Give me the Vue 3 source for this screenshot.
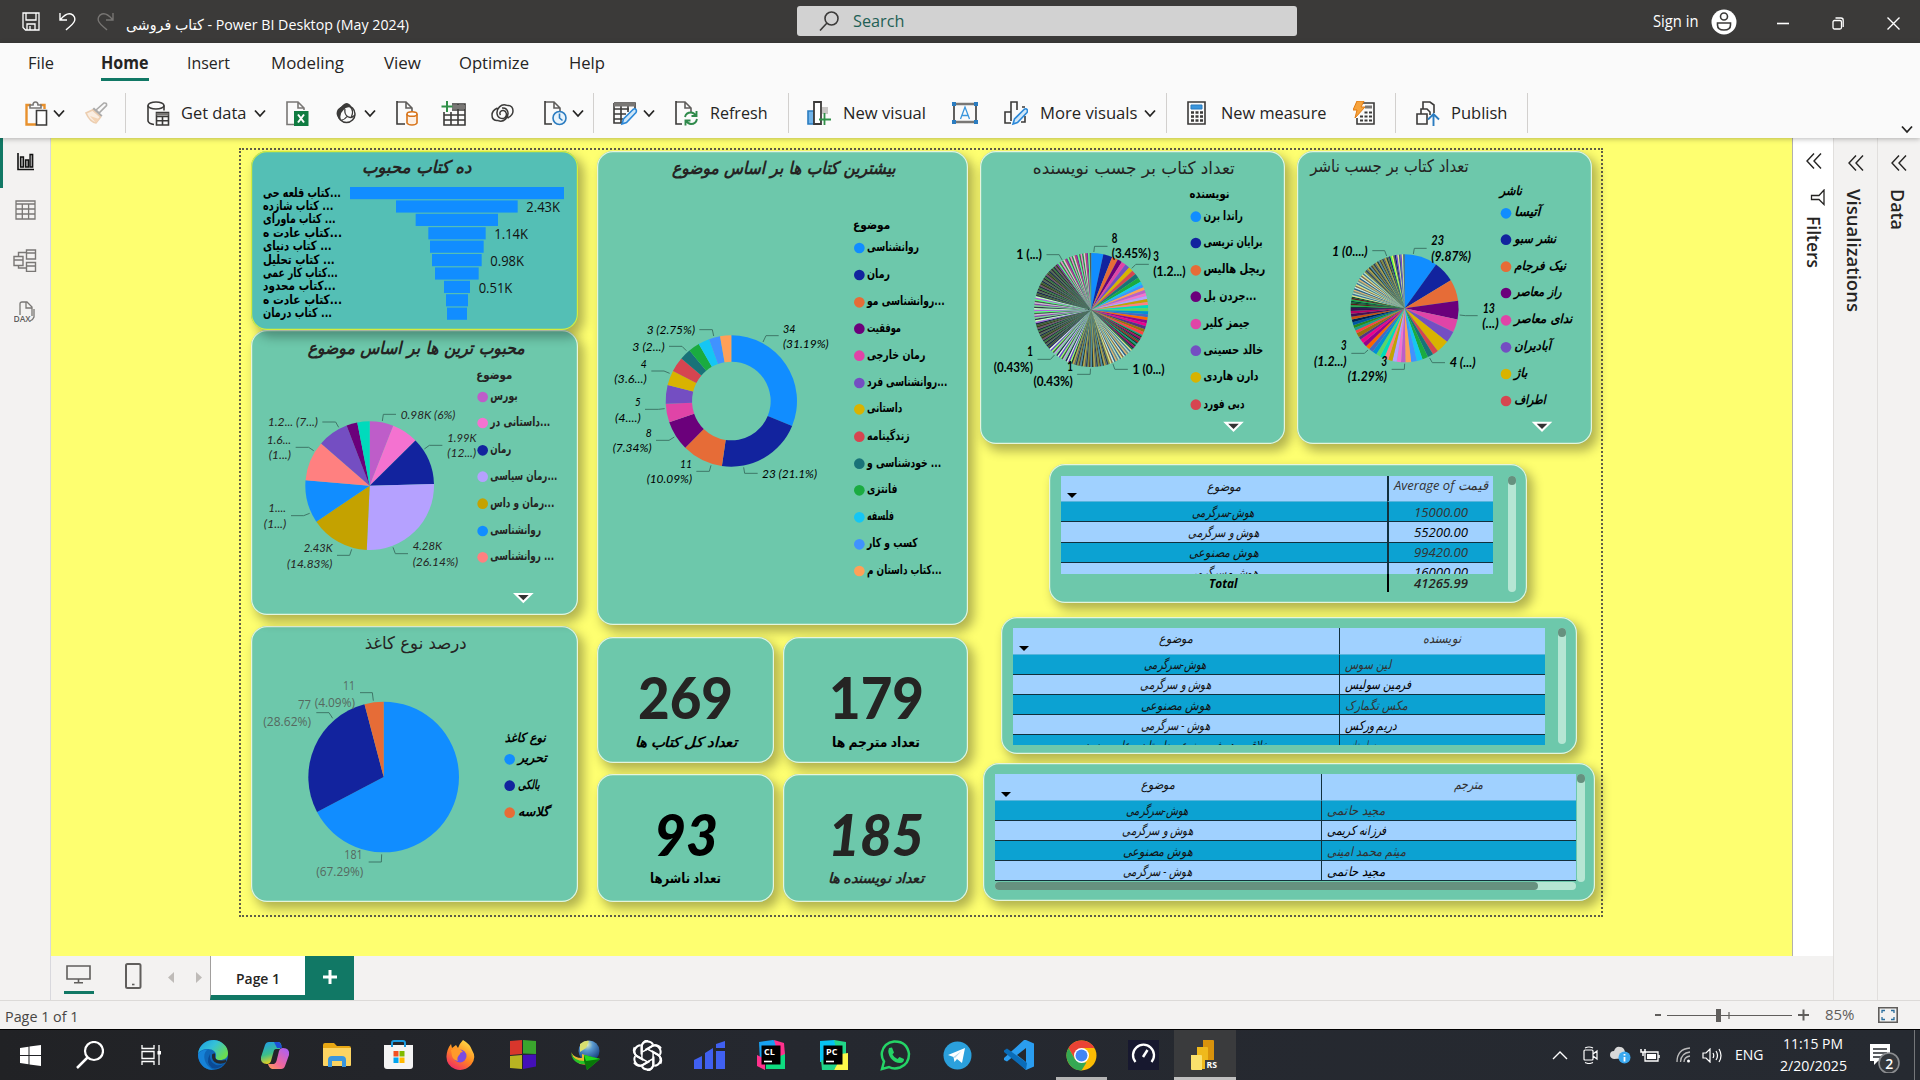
<script setup>
import { h } from 'vue'

const UI = "'Open Sans','DejaVu Sans',sans-serif"

/* Single line of text set to an exact advance width */
const T = (p) =>
  h('svg', { width: p.w, height: p.s * 1.4, overflow: 'visible' }, [
    h('text', {
      x: 0, y: p.s * 1.06, 'font-size': p.s, 'font-family': p.f || UI,
      'font-weight': p.b || 400, 'font-style': p.i ? 'italic' : 'normal',
      fill: p.c || '#252423', textLength: p.w, lengthAdjust: 'spacingAndGlyphs'
    }, p.t)
  ])
T.props = ['t', 'w', 's', 'b', 'i', 'c', 'f']

/* Icon from the table below */
const Ico = (p) => {
  const d = icons[p.n]
  return h('svg', {
    width: d[0], height: d[1], viewBox: `0 0 ${d[0]} ${d[1]}`, fill: 'none',
    stroke: '#3b3a39', 'stroke-width': 1.6, innerHTML: d[2]
  })
}
Ico.props = ['n']

const doc = (w) => `<path d="M1 1h9l6 6v5M10 1v6h6" stroke="#605e5c"/><path d="M1 0v23h${w}" stroke="#3b3a39"/>`
const grid = '<path d="M1 2h21v21H1zM1 8h21M1 13h21M1 18h21M8 2v21M15 2v21"/>'
const pen = '<path d="M9 23l1.500-5L20 8.500q2-1.500 3 0t0 3L13.500 21.500z" fill="#d0e7f8" stroke="#2b88d8"/>'

const icons = {
  chev: [12, 9, '<path d="M1 1.500l5 5.500 5-5.500" stroke="#252423" stroke-width="1.800"/>'],
  save: [18, 19, '<path d="M1 1h16v17H3.500L1 15.500zM4 1v7h10V1M5 18v-6h8v6M8 14v4" stroke="#fff" stroke-width="1.300"/>'],
  undo: [18, 19, '<path d="M1 1v7h7M1.500 7.500C6 2 9 1 12 2s5 4.500 3 8-5 5-8 8" stroke="#fff" stroke-width="1.400"/>'],
  redo: [18, 19, '<path d="M17 1v7h-7M16.500 7.500C12 2 9 1 6 2s-5 4.500-3 8 5 5 8 8" stroke="#777573" stroke-width="1.400"/>'],
  search: [20, 20, '<circle cx="12.500" cy="7.500" r="6.500"/><path d="M8 12l-7 7.500"/>'],
  user: [26, 26, '<circle cx="13" cy="13" r="12.500" fill="#fff" stroke="none"/><circle cx="13" cy="7.500" r="3.500"/><path d="M6.500 14h13v2q0 5-6.500 5t-6.500-5z"/>'],
  min: [12, 12, '<path d="M0 6.500h12" stroke="#fff"/>'],
  restore: [12, 13, '<rect x="1" y="3.500" width="8.500" height="8.500" rx="1.500" stroke="#fff" stroke-width="1.300"/><path d="M3.500 1H9q2.200 0 2.200 2.200V10" stroke="#fff" stroke-width="1.300"/>'],
  close: [13, 13, '<path d="M.5.500l12 12M12.500.500l-12 12" stroke="#fff" stroke-width="1.400"/>'],
  paste: [23, 25, '<path d="M6 4H1.500v19.500H11M15 4h4.500v4" stroke="#e8912d" stroke-width="2.400"/><path d="M5 7V4h3q0-3 2.500-3T13 4h3v3z" fill="#fafafa" stroke="#797775"/><path d="M11.500 9.500h10v14.500h-10z" fill="#fff"/>'],
  brush: [23, 22, '<g opacity=".5"><path d="M11 8l8-7q3-.5 2.500 2.500L14 11z" stroke="#605e5c"/><path d="M8 6.500l8.500 8" stroke="#605e5c" stroke-width="3"/><path d="M7.500 8L1 11q4 9 10 10l4.500-6z" stroke="#e0a368" fill="#fbe3cb"/><path d="M5 14l9 3-3 4z" fill="#f0b070" stroke="none"/></g>'],
  getdata: [23, 25, '<ellipse cx="9" cy="4.500" rx="8" ry="3.500"/><path d="M1 4.500V20q1 3 6 3.500M17 4.500v5"/><path d="M9.500 11.500h12V24h-12zM9.500 15.500h12M9.500 19.800h12M15.500 15v9"/><path d="M9.500 12h12v2.500h-12z" fill="#797775" stroke="none"/>'],
  excel: [23, 25, '<path d="M8 23.500H1V1h11l6 6v2M12 1v6h6" stroke="#797775"/><path d="M8 10h14.500v15H8z" fill="#107c41" stroke="none"/><path d="M12 13.500l6 8M18 13.500l-6 8" stroke="#fff" stroke-width="2"/>'],
  onelake: [20, 22, '<circle cx="10.500" cy="12" r="8.500" stroke-width="1.500"/><path d="M5 5q3-4 6-4 4 1 4.500 5-5-2-8 2Q3 12 5 18-2 13 2 7z" fill="#3b3a39" stroke="none"/><path d="M9 7q-1 5 2.500 7.500T19 13M5 18.500q4-1 6-4M14.500 5q3.500 4 1 9.500" stroke-width="1.300"/>'],
  sql: [23, 25, doc(8) + '<path d="M11 13v9q1 2 5 2t5-2v-9" stroke="#d8741a" fill="#fdf0e4"/><ellipse cx="16" cy="13" rx="5" ry="2.300" stroke="#d8741a" fill="#fff"/>'],
  enter: [25, 25, '<g transform="translate(2 1)">' + grid + '<path d="M8 3h14v4H8z" fill="#797775" stroke="none"/></g><path d="M0 0h11v11H0z" fill="#fafafa" stroke="none"/><path d="M6 0v11M.5 5.500h11" stroke="#309048" stroke-width="2"/>'],
  dataverse: [23, 18, '<path d="M15.500 1.200C10-.5 5.500 4.500 6 9.500s5.500 6 8 4 1.500-6.500-1.500-7-4.500 2.500-3 4.500M6.500 4Q1 6.500 1 11q0 5 4.500 5.500M7.500 16.800C13 18.500 17.500 13.500 17 8.500M16.500 14Q22 11.500 22 7q0-5.500-6.500-5.800M17 8.500Q16 3.500 11 4M5.500 16.500h2" stroke-width="1.500"/>'],
  recent: [23, 25, doc(7) + '<circle cx="15.500" cy="17" r="6.500" stroke="#2b7cc0" fill="#e8f3fb"/><path d="M15.500 12.500V17l3 2.500" stroke="#2b7cc0"/>'],
  transform: [25, 25, '<path d="M1 2h21v6M1 2v20h8M1 8h15M1 13h12M1 18h9M8 2v20M15 5v6"/><path d="M1 1.500h21v4H1z" fill="#797775" stroke="none"/>' + pen],
  refresh: [23, 25, doc(6) + '<path d="M10 16q1-4.500 6-4.500 3 0 5 3.500M21.500 10v5h-5M22 18q-1 5-6 5-3 0-5-3.500M10.500 24.500v-5h5" stroke="#2f8a4b" stroke-width="1.900"/>'],
  visual: [24, 25, '<path d="M1 10h6v13H1z" fill="#71b4ea" stroke="#2b7cc0"/><path d="M7 1h7v22H7z" fill="#fff" stroke-width="1.800"/><path d="M15 6h6v7h-6z" fill="#c8c6c4" stroke="none"/><path d="M17.500 12v12M12 18.500h12" stroke="#309048" stroke-width="1.800"/>'],
  textbox: [26, 22, '<path d="M2 2h22v18H2z"/><path d="M2 2h22M2 20h22" stroke="#797775" stroke-width="2.500"/><path d="M0 0h4v4H0zM22 0h4v4h-4zM0 18h4v4H0zM22 18h4v4h-4z" fill="#2b7cc0" stroke="none"/><path d="M8.500 17L13 5l4.500 12M10 13.500h6" stroke="#3a96dd" stroke-width="1.300"/>'],
  more: [24, 25, '<path d="M7 22H1V11h6V1h6v8M18 6h3M7 11v9"/>' + '<path d="M17 21h4v-6"/>' + pen],
  calc: [19, 24, '<path d="M1 1h17v22H1z"/><path d="M4 4h11v4H4z" fill="#3a96dd" stroke="#2b7cc0" stroke-width="1"/><path d="M4 11.500h3M8.500 11.500h3M13 11.500h3M4 15.500h3M8.500 15.500h3M13 15.500h3M4 19.500h3M8.500 19.500h3M13 19.500h3" stroke-width="2.300"/>'],
  quick: [22, 25, '<path d="M10 2h11v21H4v-6"/><path d="M12 6h7" stroke="#797775" stroke-width="3"/><path d="M7 15.500h3M11.500 15.500h3M16 15.500h3M7 19.500h3M11.500 19.500h3M16 19.500h3M11.500 11.500h3M16 11.500h3" stroke-width="2.200"/><path d="M4 0h7L8 6h4L2 17l2-8H0z" fill="#f7a33c" stroke="#e07a10" stroke-width="1"/>'],
  publish: [24, 25, '<path d="M7 8V1h7l4 3v8M5 13V8h6l3 3v3M1 13h10v10H1z" /><path d="M17.500 25V14M12 18.500l5.500-5.500 5.500 5.500" stroke="#2b7cc0" stroke-width="1.900"/>'],
  bars: [17, 18, '<path d="M1 0v16.500h16" stroke="#111"/><path d="M3.500 4h3v10h-3zM8.500 7h3v7h-3zM13 1.500h2.700V14H13z" stroke="#111" fill="#999" stroke-width="1.300"/>'],
  table: [21, 20, '<path d="M1 1h19v18H1zM1 4h19M1 9h19M1 14h19M7.300 4v15M13.600 4v15" stroke="#797775" stroke-width="1.300"/>'],
  model: [24, 23, '<path d="M13.500 1h9v9h-9zM13.500 4h9M1 7.500h9v9H1zM1 11h9M13.500 13.500h9v9h-9zM13.500 17h9M5.500 7.500v-4h8M5.500 16.500V19h8" stroke="#797775" stroke-width="1.400"/>'],
  dax: [22, 21, '<path d="M6 14V3q0-2 2-2h5l5 5v9M12 1v6h6M20 8v8q-1 3-4 4" stroke="#797775" stroke-width="1.300"/><text x="-.5" y="20.500" font-size="8.500" font-weight="600" font-family="Open Sans" fill="#605e5c" stroke="none" textLength="17">DAX</text>'],
  dbl: [16, 16, '<path d="M8 .5L1 8l7 7.500M15 .500L8 8l7 7.500" stroke="#252423" stroke-width="1.400"/>'],
  funnel: [15, 17, '<path d="M14 1v14.500L9 10.500H1.500v-4H9z" stroke="#252423" stroke-width="1.300"/>'],
  monitor: [25, 19, '<path d="M1 1h23v13H1zM12.500 14v4M8 17.800h9" stroke="#605e5c"/>'],
  phone: [17, 26, '<rect x="1" y="1" width="14.500" height="24" rx="1.500" stroke="#605e5c" stroke-width="2"/><path d="M7 21.500h2.500" stroke="#605e5c"/>'],
  prev: [6, 11, '<path d="M6 0v11L0 5.500z" fill="#bebbb8" stroke="none"/>'],
  next: [6, 11, '<path d="M0 0v11l6-5.500z" fill="#bebbb8" stroke="none"/>'],
  plus: [14, 14, '<path d="M7 0v14M0 7h14" stroke="#fff" stroke-width="3"/>'],
  slider: [155, 16, '<path d="M0 8h6M143 8h11M148.500 2.500v11" stroke="#605e5c" stroke-width="2"/><path d="M12 8.500h125" stroke="#605e5c" stroke-width="1.200"/><path d="M63.500 2v13" stroke="#605e5c" stroke-width="5"/><path d="M74 5v7" stroke="#605e5c" stroke-width="1.200"/>'],
  fit: [20, 16, '<path d="M.8.800h18.400v14.400H.800z" stroke="#605e5c"/><path d="M4 6V3.500h3M13 3.500h3V6M16 10v2.500h-3M7 12.500H4V10" stroke="#2b6f9e" stroke-width="1.300"/>'],
  win: [21, 21, '<path d="M0 3l8.500-1.200v8.200H0zM9.500 1.600L21 0v10H9.500zM0 11h8.500v8.200L0 18zM9.500 11H21v10L9.500 19.400z" fill="#fff" stroke="none"/>'],
  find: [28, 28, '<circle cx="18" cy="10" r="9" stroke="#fff" stroke-width="2.200"/><path d="M11.500 16.500L1 27" stroke="#fff" stroke-width="2.500"/>'],
  tasks: [21, 20, '<path d="M1 0v3.500h12V0M1 20v-3.500h12V20M1 6.500h12v7H1zM18 0v20" stroke="#fff" stroke-width="1.300"/><path d="M16.500 6h3.500v3.500h-3.500z" fill="#fff" stroke="none"/>'],
  edge: [30, 30, '<defs><linearGradient id="ge" x1="0" y1="0" x2="1" y2=".6"><stop stop-color="#1b9de2"/><stop offset=".5" stop-color="#35c1d8"/><stop offset="1" stop-color="#6bdc4f"/></linearGradient></defs><g stroke="none"><circle cx="15" cy="15" r="15" fill="#0f67b8"/><path d="M0 14C1 4 9 0 16 0c9 1 14 7 14 13 0 5-4 7-8 7-3 0-5-1-4-3 1-5-3-8-8-8-5 0-9 2-10 5z" fill="url(#ge)"/><path d="M10 9.500C4 12 5 25 15 29.500 8 31 0 24 0 14q4-5 10-4.500z" fill="#1683d8"/><path d="M12 14q-1 8 6 11 5 1 9-2-6 7-13 5-7-5-2-14z" fill="#0b4a94"/><path d="M28.500 22q-5 3-10 1-5-2-4.500-8 0-2 3-1.500-1 8 7 7 3 0 4-1z" fill="#25282e"/></g>'],
  copilot: [30, 28, '<defs><linearGradient id="c1" x1="0" y1="0" x2=".3" y2="1"><stop stop-color="#1f9cf0"/><stop offset=".6" stop-color="#3cbf8a"/><stop offset="1" stop-color="#e8d020"/></linearGradient><linearGradient id="c2" x1=".8" y1="0" x2="0" y2="1"><stop stop-color="#b060f0"/><stop offset=".6" stop-color="#f0689a"/><stop offset="1" stop-color="#fba052"/></linearGradient></defs><g stroke="none"><path d="M9 1h9q3 0 3.500 4L20 8h-4q-2 0-2.500 3L11 20q-1 3-4 3-7 0-6-7L5 4q1-3 4-3z" fill="url(#c1)"/><path d="M23 7q7 0 6 7l-4 11q-1 3-4 3h-9q-3-1-4-5h6q2-1 2.500-3L19 10q1-3 4-3z" fill="url(#c2)"/><path d="M14 1h4q3 0 4 6h-5z" fill="#1d4fd8"/></g>'],
  folder: [28, 24, '<g stroke="none"><path d="M0 2q0-2 2-2h9l3 3h12q2 0 2 2v17H0z" fill="#e8a713"/><path d="M0 5h28v17q0 1-1 1H1q-1 0-1-1z" fill="#fcd462"/><path d="M5 24v-7q0-4 4-4h10q4 0 4 4v7h-4v-6H9v6z" fill="#3a96dd"/></g>'],
  store: [30, 30, '<g stroke="none"><path d="M0 5h29v21q0 3-3 3H3q-3 0-3-3z" fill="#f4f4f4"/><path d="M9.500 11h5v5.500h-5z" fill="#f25022"/><path d="M15.500 11h5v5.500h-5z" fill="#7fba00"/><path d="M9.500 17.500h5V23h-5z" fill="#00a4ef"/><path d="M15.500 17.500h5V23h-5z" fill="#ffb900"/></g><path d="M8 7V3q0-2 2-2h9q2 0 2 2v4" stroke="#1a9be0" stroke-width="2"/>'],
  firefox: [30, 30, '<defs><linearGradient id="ff" x1=".8" y1="0" x2=".2" y2="1"><stop stop-color="#ffe14a"/><stop offset=".5" stop-color="#ff8a1f"/><stop offset="1" stop-color="#f0256a"/></linearGradient></defs><g stroke="none"><path d="M17 0q7 4 9 10 5 8-1 15-7 7-16 4-9-4-8.500-13Q1 9 5 4l1 4 4-3 2 3q2-5 5-8z" fill="url(#ff)"/><circle cx="14" cy="16" r="6.500" fill="#7b4be0"/><path d="M5 10q5-3 9-1l3 3q-3 0-3 2-4 4-2 7-5-1-6-5z" fill="#ff9a2b"/></g>'],
  flag: [28, 30, '<g stroke="none"><path d="M1 1l12-1v14L1 15z" fill="#d8362c"/><path d="M14 0l13 1v13l-13-.5z" fill="#3aa52d"/><path d="M1 16l12-1v14l-12-1z" fill="#b8b422"/><path d="M14 15l13-.5v12L14 29z" fill="#4410b8"/></g>'],
  idm: [30, 30, '<defs><radialGradient id="gl" cx=".4" cy=".2" r=".8"><stop stop-color="#e8f4c0"/><stop offset=".35" stop-color="#5a9ad0"/><stop offset="1" stop-color="#143c7c"/></radialGradient></defs><g stroke="none"><circle cx="19" cy="11" r="10.500" fill="url(#gl)"/><path d="M10 4q5-4 9-3l-3 7-6 4z" fill="#d8e070"/><path d="M1 12q3 6 11 6v-4l6 2-1 8q-11 3-16-12z" fill="#e8b830"/><path d="M1 13q3 8 13 8v-6l16 4-13 11-1-6Q3 25 1 13z" fill="#28c428"/><path d="M14 21v-6l16 4-13 11z" fill="#087808"/><path d="M14 15l16 4-14 2z" fill="#20d820"/></g>'],
  gpt: [31, 31, '<g stroke="#fff" stroke-width="2" transform="translate(15.500 15.500)">' + [0, 60, 120, 180, 240, 300].map(a => `<path transform="rotate(${a})" d="M-6-1V-9q1-5 6-5 4 0 5.500 3M0-6.500L6-10q5-1 7.500 3"/>`).join('') + '<path d="M0-6.500l5.600 3.200v6.500L0 6.500l-5.600-3.300v-6.500z" stroke-width="1.500"/></g>'],
  stat: [31, 28, '<g fill="#4060f0" stroke="none"><path d="M0 19l8-4v13H0zM11 12l8-5v21h-8zM22 10h9v18h-9z"/><path d="M22 3l9-3v7h-9z"/></g>'],
  cl: [30, 30, '<g stroke="none"><path d="M3 2l14-2 10 4 2 12-10 12-15-6z" fill="#18a0f0"/><path d="M18 0l10 3 1 12-6 2z" fill="#ff318c"/><path d="M1 15l8 4v11l-8-4z" fill="#ff318c"/><path d="M10 22l19-8v15H10z" fill="#0edc80"/><path d="M5.500 5.500h19v19h-19z" fill="#000"/></g><text x="8" y="15" font-size="9" font-weight="700" font-family="Open Sans" fill="#fff" stroke="none">CL</text><path d="M8 21.500h8" stroke="#fff"/>'],
  pc: [30, 30, '<g stroke="none"><path d="M2 1l15-1 4 20L2 22z" fill="#07c3f2"/><path d="M16 0l12 2v12l-8 3z" fill="#21d789"/><path d="M23 14l7-1v17H16l2-8z" fill="#fcf84a"/><path d="M3 20l17 3-4 7H4z" fill="#21d789"/><path d="M5.500 5.500h19v19h-19z" fill="#000"/></g><text x="8" y="15" font-size="9" font-weight="700" font-family="Open Sans" fill="#fff" stroke="none">PC</text><path d="M8 21.500h8" stroke="#fff"/>'],
  wa: [31, 31, '<path d="M2 29l2-7.500Q1 17 2 12 4 3 14 1.500 27 1 29 14q0 10-9 13.500-6 2-11-.5z" stroke="#25d366" stroke-width="2.500"/><path d="M9 8l3-.5 2 5-1.500 2q1.500 3 5 4.500l2-2 4.500 2q0 4-4 4-5 0-9-4.500Q7 13 9 8z" fill="#25d366" stroke="none"/>'],
  tg: [29, 29, '<circle cx="14.500" cy="14.500" r="14" fill="#2ba0dc" stroke="none"/><path d="M5 14l17-7-3 15-5-4-2.500 3-1-5z" fill="#fff" stroke="none"/><path d="M10.500 16l8-6-6.500 7z" fill="#b4d8ec" stroke="none"/>'],
  code: [31, 30, '<g stroke="none"><path d="M22 0l8 3.500v23L22 30 8 17.500l-5 4L0 20v-2l20-18z" fill="#2a9df0"/><path d="M3 8.500l-3 2V12l22 18 1-7z" fill="#0a6cb8"/><path d="M22 8v14l-9-7z" fill="#25282e"/></g>'],
  chrome: [31, 31, '<g stroke="none"><circle cx="15.500" cy="15.500" r="15" fill="#fbbc04"/><path d="M2.500 8A15 15 0 0 1 28.500 8H15.500l-6.500 11z" fill="#ea4335"/><path d="M2.500 8L9 19.300l6.500 3.200h5L15.500 30.500A15 15 0 0 1 2.500 8z" fill="#34a853"/><circle cx="15.500" cy="15.500" r="7.500" fill="#fff"/><circle cx="15.500" cy="15.500" r="6" fill="#4285f4"/></g>'],
  speed: [31, 30, '<path d="M0 0h31v30H0z" fill="#17182f" stroke="none"/><path d="M7.500 22A10.500 10.500 0 1 1 23.500 22" stroke="#fff" stroke-width="2.300"/><path d="M15 17l4.500-7" stroke="#fff" stroke-width="2.500"/>'],
  pbi: [28, 30, '<g stroke="none"><path d="M12 0h10q1 0 1 1v28H12z" fill="#d9930c"/><path d="M6 7h10q1 0 1 1v21H6z" fill="#efb91c"/><path d="M0 15h10q1 0 1 1v14H1q-1 0-1-1z" fill="#fae16c"/><path d="M14 20h13v9H14z" fill="#3c3c3c"/></g><text x="15.500" y="28" font-size="8.500" font-weight="700" font-family="Open Sans" fill="#fff" stroke="none" textLength="10.500" lengthAdjust="spacingAndGlyphs">RS</text>'],
  up: [16, 9, '<path d="M1 8l7-7 7 7" stroke="#fff" stroke-width="1.400"/>'],
  meet: [15, 18, '<path d="M1 5q0-1 1-1h7q1 0 1 1v8q0 1-1 1H2q-1 0-1-1zM10 8l4-3v8l-4-3M2 2q4-2 8 0M2 16.500q4 2 8 0" stroke="#fff" stroke-width="1.200"/>'],
  cloud: [21, 18, '<path d="M4 13q-4-1-4-4 0-4 4-4Q6 0 10 1q4 0 5 5 3 1 2 6z" fill="#d8d8d8" stroke="none"/><circle cx="14.500" cy="11.500" r="6" fill="#3aa8f0" stroke="none"/><path d="M14.500 8v1.500M14.500 11v4.500" stroke="#fff" stroke-width="1.800"/>'],
  batt: [20, 14, '<path d="M5 4h13v9H5z" stroke="#fff" stroke-width="1.300"/><path d="M7 6h9v5H7z" fill="#fff" stroke="none"/><path d="M19 7v3M1 1v3h4V1M3 4v4" stroke="#fff" stroke-width="1.500"/>'],
  wifi: [15, 16, '<path d="M1 15Q1 2 14 1M4.500 15Q5 6 14 5M8 15q0-5 6-6" stroke="#bbb" stroke-width="1.300"/><circle cx="12.500" cy="14" r="1.500" fill="#fff" stroke="none"/>'],
  vol: [20, 15, '<path d="M1 5h3l4-4v13l-4-4H1zM11 5q1.500 2.500 0 5M14 3q3 4.500 0 9M17 1q4 6.500 0 13" stroke="#fff" stroke-width="1.200"/>'],
  note: [32, 32, '<path d="M2 3h20v17H10l-4 4v-4H2z" fill="#fff" stroke="none"/><path d="M5 8h14M5 12h14M5 16h9" stroke="#25282e" stroke-width="1.500"/><circle cx="21" cy="22" r="10" fill="#35383d" stroke="#8b8d90"/><text x="17.300" y="27.500" font-size="14" font-weight="600" font-family="Open Sans" fill="#fff" stroke="none">2</text>']
}

const tabs = [['File', 26, 28], ['Home', 47.5, 47], ['Insert', 43, 38.5], ['Modeling', 73, 40.5], ['View', 37, 40], ['Optimize', 70, 38.5], ['Help', 36, 39.5]]

/* ribbon: [kind, icon or caption, gap before, caption width] */
const ribbon = [
  ['i', 'paste', 25], ['i', 'chev', 5], ['i', 'brush', 20], ['s', '', 17], ['i', 'getdata', 21], ['t', 'Get data', 11, 65.5], ['i', 'chev', 7.5],
  ['i', 'excel', 20], ['i', 'onelake', 26.5], ['i', 'chev', 8], ['i', 'sql', 20], ['i', 'enter', 22], ['i', 'dataverse', 25.5], ['i', 'recent', 30],
  ['i', 'chev', 4.5], ['s', '', 9.5], ['i', 'transform', 19], ['i', 'chev', 5], ['i', 'refresh', 19.5], ['t', 'Refresh', 12, 57.5], ['s', '', 20.5],
  ['i', 'visual', 18.5], ['t', 'New visual', 12, 83], ['i', 'textbox', 26], ['i', 'more', 26], ['t', 'More visuals', 11.5, 97.5], ['i', 'chev', 6.5], ['s', '', 10],
  ['i', 'calc', 20], ['t', 'New measure', 15.5, 105.5], ['i', 'quick', 26.5], ['s', '', 20], ['i', 'publish', 19.5], ['t', 'Publish', 11.5, 56.5], ['s', '', 19.5]
]
const apps = ['edge', 'copilot', 'folder', 'store', 'firefox', 'flag', 'idm', 'gpt', 'stat', 'cl', 'pc', 'wa', 'tg', 'code', 'chrome', 'speed', 'pbi']
const tray = [['up', 0], ['meet', 15], ['cloud', 12], ['batt', 9], ['wifi', 16], ['vol', 11]]

/* report theme colours */
const P = ['#118DFF', '#12239E', '#E66C37', '#6B007B', '#E044A7', '#744EC2', '#D9B300', '#D64550', '#197278', '#1AAB40', '#15C6F4', '#4092FF', '#FFA058', '#BE5DC9', '#F472D0', '#B5A1FF', '#C4A200', '#FF8080', '#00DBBC', '#5BD667', '#0091D5', '#4668C5', '#FF6300', '#99008A', '#EC008C', '#533285', '#99700A', '#FF4141', '#1F9A85', '#25891C', '#0057A2', '#002050', '#C94F0F', '#450F54', '#B60064', '#34124F']
const cycle = (n, list) => Array.from({ length: n }, (_, i) => [1, list[i % list.length]])
const dark = ['#4a5a2c', '#1c2448', '#5b6a52', '#2a2033', '#3f7a3a', '#20303c', '#7a4a6a', '#343c1c']
const olive = ['#8a8a3a', '#2b3a5c', '#6a6f58', '#c0a040', '#253a36', '#4f88a8', '#554433']
const pale = ['#e8e08a', '#3d6f9a', '#b8d8c8', '#7a8a78', '#e8b070', '#2f5f88', '#d0e8e8', '#8e6a4a']
const vivid = ['#9aff6a', '#6a3ad0', '#e8f0e0', '#2a2060', '#7fe08a', '#c89af0', '#405a40']
const mixed = ['#b068e0', '#c8ffc0', '#333a4a', '#7fd88f', '#8a4aa8', '#d8b0d8', '#46604a', '#5aff78']

const authors = [...[8, 6, 4, 3, 3, 3, 3, 3, 3, 3].map((v, i) => [v, P[i]]), ...P.slice(10, 28).map(c => [2, c]),
  ...cycle(12, ['#1F9A85', '#0b511f', '#B60064', '#34124F', '#1c6b3c', '#ba141a', '#0c3d37']), ...cycle(17, pale), ...cycle(26, olive),
  ...cycle(18, vivid), ...cycle(18, dark), ...cycle(19, mixed), ...cycle(24, dark), ...cycle(24, ['#7a2a9a', '#5aff88', '#555f50', '#f08ad0', '#2f8a4a', '#d0d8c8', '#c03a7a'])]
const publishers = [...[23, 15, 15, 13, 9, 8, 9, 4, 4, 4, 4, 4, 4, 3, 3, 3, 3, 3, 3, 3, 3, 3, 3, 3, 3, 2, 3, 2, 2, 2, 2, 2, 2, 2, 2, 2].map((v, i) => [v, P[i]]),
  ...cycle(8, ['#0c3d37', '#1AAB40', '#5c1a1a', '#0b511f']), ...cycle(19, pale), ...cycle(19, olive), ...cycle(6, ['#5b6a52', '#1a1a80', '#5aff30', '#f0f060']), ...cycle(6, ['#7a4ad0', '#e8e890', '#405a80'])]

const slices = (cx, cy, R, r, list) => {
  const total = list.reduce((s, v) => s + v[0], 0)
  let a = 0
  return list.map(([v, fill]) => {
    const b = a + (v / total) * Math.PI * 2
    const pt = (q, t) => `${(cx + q * Math.sin(t)).toFixed(2)} ${(cy - q * Math.cos(t)).toFixed(2)}`
    const big = b - a > Math.PI ? 1 : 0
    const d = `M${pt(R, a)}A${R} ${R} 0 ${big} 1 ${pt(R, b)}L${pt(r, b)}` + (r ? `A${r} ${r} 0 ${big} 0 ${pt(r, a)}` : '') + 'Z'
    a = b
    return { d, fill }
  })
}

/* charts: box = [left, top, width, height] on the window, view = drawing space of the visual.
   labels and legend rows carry their left and right edges. */
const charts = [
  {
    k: 'donut', box: [597, 151, 371, 474], view: '21 33 1113 1422',
    title: ['بیشترین کتاب ها بر اساس موضوع', 246, 917, 103], tb: 1, ti: 1,
    slices: slices(424, 783, 197, 118, [34, 23, 11, 8, 5, 5, 4, 4, 3, 3, 3, 3, 3].map((v, i) => [v, P[i]])),
    lt: ['موضوع', 789, 901, 268], dx: 808, tx: 831,
    legend: [['روانشناسی', 987, 324], ['رمان', 900, 405], ['روانشناسی مو...', 1064, 487], ['موفقیت', 933, 566], ['رمان خارجی', 1006, 647], ['روانشناسی فرد...', 1072, 729], ['داستانی', 937, 808], ['زندگینامه', 959, 890], ['خودشناسی و ...', 1054, 971], ['فانتزی', 922, 1051], ['فلسفه', 912, 1132], ['کسب و کار', 983, 1213], ['کتاب داستان م...', 1055, 1293]].map((r, i) => [...r, P[i]]),
    li: 1, labels: [['34', 579, 617, 579], ['(31.19%)', 579, 716, 624], ['23 (21.1%)', 516, 681, 1014], ['11', 270, 306, 984], ['(10.09%)', 170, 306, 1030], ['8', 167, 185, 891], ['(7.34%)', 68, 185, 936], ['5', 135, 152, 798], ['(4....)', 75, 152, 846], ['4', 152, 170, 683], ['(3.6...)', 73, 170, 729], ['3 (2...)', 127, 224, 633], ['3 (2.75%)', 170, 315, 582]],
    lines: ['519,606 528,587 566,587', '461,982 464,1000 503,1000', '363,976 358,994 319,994', '253,891 237,901 198,901', '224,806 205,808 165,808', '239,700 222,693 184,693', '289,632 276,619 237,619', '371,588 367,569 328,569']
  },
  {
    k: 'author', box: [979.5, 151, 305.5, 293], view: '28.5 33 916.5 879',
    title: ['تعداد کتاب بر جسب نویسنده', 187, 793, 103],
    slices: slices(362, 510, 171, 0, authors),
    lt: ['نویسنده', 657, 777, 174], dx: 676, tx: 699,
    legend: [['راندا برن', 817, 230], ['برایان تریسی', 876, 309], ['ریچل هالیس', 884, 391], ['جردن بل...', 858, 470], ['جیمز کلیر', 838, 552], ['خالد حسینی', 878, 632], ['دارن هاردی', 864, 712], ['دبی فورد', 822, 794]].map((r, i) => [...r, P[i]]),
    lb: 1, labels: [['8', 424, 441, 309], ['(3.45%)', 424, 541, 355], ['3', 548, 565, 363], ['(1.2...)', 548, 645, 407], ['1 (0...)', 486, 582, 702], ['1', 290, 307, 694], ['(0.43%)', 189, 307, 738], ['1', 170, 187, 648], ['(0.43%)', 70, 187, 695], ['1 (...)', 137, 214, 358]],
    lines: ['370,336 372,319 411,319', '484,385 496,373 535,373', '427,671 433,688 472,688', '360,686 359,703 320,703', '252,645 240,658 201,658', '275,360 266,344 228,344'],
    more: [789, 845]
  },
  {
    k: 'publisher', box: [1297, 151, 295, 293], view: '36 33 885 879', ls: 'slant',
    title: ['تعداد کتاب بر جسب ناشر', 76, 551, 95],
    slices: slices(359, 505, 162, 0, publishers),
    lt: ['ناشر', 644, 711, 165], dx: 663, tx: 688,
    legend: [['آتیسا', 766, 220], ['نشر سبو', 813, 299], ['نیک فرجام', 843, 380], ['راز معاصر', 830, 459], ['ندای معاصر', 862, 541], ['آبادیران', 798, 622], ['باژ', 727, 702], ['اطراف', 782, 783]].map((r, i) => [...r, P[i]]),
    lb: 1, li: 1, labels: [['23', 439, 477, 315], ['(9.87%)', 439, 558, 363], ['13', 593, 630, 519], ['(...)', 592, 641, 565], ['4 (...)', 494, 572, 681], ['3', 289, 307, 679], ['(1.29%)', 188, 306, 723], ['3', 168, 185, 630], ['(1.2...)', 87, 185, 678], ['1 (0....)', 141, 248, 348]],
    lines: ['385,342 388,325 425,325', '524,525 541,527 578,527', '434,654 442,668 480,668', '359,671 358,688 320,688', '249,630 238,640 199,640', '305,348 299,332 262,332'],
    more: [771, 845]
  },
  {
    k: 'paper', box: [251, 626, 327, 276], view: '753 1878 981 828', ls: 'slant',
    title: ['درصد نوع کاغذ', 1094, 1400, 1948],
    slices: slices(1151, 2331, 226, 0, [[181, P[0]], [77, P[1]], [11, P[2]]]),
    lt: ['نوع کاغذ', 1514, 1637, 2225], dx: 1529, tx: 1554,
    legend: [['تحریر', 1640, 2278, P[0]], ['بالکی', 1619, 2357, P[1]], ['گلاسه', 1647, 2438, P[2]]],
    grey: 1, labels: [['11', 1029, 1065, 2070], ['(4.09%)', 944, 1065, 2120], ['77', 894, 933, 2127], ['(28.62%)', 790, 933, 2177], ['181', 1033, 1088, 2577], ['(67.29%)', 949, 1090, 2627]],
    lines: ['1120,2102 1117,2078 1080,2078', '998,2155 987,2138 949,2138', '1145,2563 1144,2586 1106,2586']
  },
  {
    k: 'topic', box: [251, 330, 327, 285], view: '63 570 981 855', ls: 'semi', dim: 1,
    title: ['محبوب ترین ها بر اساس موضوع', 233, 884, 643], tb: 1, ti: 1,
    slices: slices(419, 1037, 193, 0, [[21.5, P[13]], [23.9, P[14]], [43.1, P[1]], [94.1, P[15]], [53.4, P[16]], [38.8, P[0]], [36.2, P[17]], [28, P[5]], [9.9, P[3]], [11.1, P[18]]]),
    lt: ['موضوع', 739, 847, 716], dx: 758, tx: 781,
    legend: [['بورس', 863, 771, P[13]], ['داستانی در...', 961, 849, P[14]], ['رمان', 844, 931, P[1]], ['رمان سیاسی...', 982, 1010, P[15]], ['رمان و داس...', 973, 1091, P[16]], ['روانشناسی', 933, 1173, P[0]], ['روانشناسی ...', 972, 1252, P[17]]],
    li: 1, labels: [['0.98K (6%)', 512, 676, 837], ['1.99K', 652, 739, 906], ['(12...)', 652, 738, 950], ['4.28K', 548, 636, 1230], ['(26.14%)', 548, 684, 1278], ['2.43K', 221, 308, 1236], ['(14.83%)', 171, 307, 1284], ['1....', 115, 168, 1116], ['(1...)', 101, 169, 1163], ['1.6...', 110, 183, 912], ['(1...)', 116, 183, 956], ['1.2... (7...)', 113, 264, 858]],
    lines: ['457,843 460,823 498,823', '583,927 598,916 637,916', '489,1222 496,1241 534,1241', '365,1228 359,1246 321,1246', '239,1120 221,1127 183,1127', '251,932 236,922 197,922', '326,862 317,846 277,846'],
    more: [880, 1359]
  }
]

const funnel = [['کتاب قلعه حی...', 333, 360, 1002], ['کتاب شازده ...', 310, 498, 863, '2.43K'], ['کتاب ماورای ...', 317, 557, 804], ['کتاب عادت ه...', 336, 595, 767, '1.14K'], ['کتاب دنیای ...', 305, 600, 761], ['کتاب تحلیل ...', 314, 606, 755, '0.98K'], ['کتاب کار عمی...', 323, 615, 746], ['کتاب محدود...', 317, 642, 720, '0.51K'], ['کتاب عادت ه...', 336, 648, 714], ['کتاب درمان ...', 306, 651, 711]]

const kpis = [
  { box: [597, 637, 176.5, 126], n: '269', nw: 95, t: 'تعداد کل کتاب ها', w: 102, i: 1, c: '#252423' },
  { box: [783, 637, 185, 126], n: '179', nw: 95, t: 'تعداد مترجم ها', w: 88, c: '#252423' },
  { box: [597, 773.5, 176.5, 128], n: '93', nw: 64, t: 'تعداد ناشرها', w: 71, ni: 1, c: '#000' },
  { box: [783, 773.5, 185, 128], n: '185', nw: 96, t: 'تعداد نویسنده ها', w: 96, ni: 1, i: 1, c: '#252423', lc: '#252423' }
]

const subj = [['هوش-سرگرمی', 62.5], ['هوش و سرگرمی', 71], ['هوش مصنوعی', 69.5], ['هوش - سرگرمی', 69]]
const tables = [
  { k: 'price', box: [1048.5, 464, 478, 138.5], h: ['Average of قیمت', 93.5], vals: [['15000.00', 54], ['55200.00', 54], ['99420.00', 54], ['16000.00', 54]], subj },
  { k: 'writer', box: [1000.5, 616.5, 576, 137.5], h: ['نویسنده', 38], vals: [['لین سوس', 46], ['فرمین سولیس', 66], ['مکس تگمارک', 62.5], ['دریم ورکس', 52], ['مسعود باستانی', 52]], subj: [...subj, ['خلاقیت هوش مصنوعی داستان و علوم مدرن', 184]] },
  { k: 'translator', box: [982.5, 762.5, 612.5, 138.5], h: ['مترجم', 29], vals: [['مجید حاتمی', 58], ['فرزانه کریمی', 59], ['میثم محمد امینی', 79], ['مجید حاتمی', 58]], subj }
]
const place = (b) => ({ left: b[0] - 241 + 'px', top: b[1] - 150 + 'px', width: b[2] + 'px', height: b[3] + 'px' })
</script>

<template>
  <div class="window">
    <header class="titlebar">
      <div class="quick"><Ico n="save" /><Ico n="undo" /><Ico n="redo" /></div>
      <T t="کتاب فروشی - Power BI Desktop (May 2024)" :w="283" :s="15" c="#fff" class="doc" />
      <div class="search"><Ico n="search" /><T t="Search" :w="51.5" :s="17" c="#1f6055" /></div>
      <div class="account"><T t="Sign in" :w="45.5" :s="15.5" c="#fff" /><Ico n="user" /></div>
      <div class="controls"><Ico n="min" /><Ico n="restore" /><Ico n="close" /></div>
    </header>

    <section class="ribbon">
      <nav class="tabs">
        <div v-for="t in tabs" :key="t[0]" class="tab" :class="{ on: t[0] === 'Home' }" :style="{ marginLeft: t[2] + 'px' }">
          <T :t="t[0]" :w="t[1]" :s="17" :b="t[0] === 'Home' ? 700 : 400" />
        </div>
      </nav>
      <div class="tools">
        <template v-for="(r, i) in ribbon" :key="i">
          <Ico v-if="r[0] === 'i'" :n="r[1]" :style="{ marginLeft: r[2] + 'px' }" />
          <T v-else-if="r[0] === 't'" :t="r[1]" :w="r[3]" :s="17" :style="{ marginLeft: r[2] + 'px' }" />
          <i v-else class="sep" :style="{ marginLeft: r[2] + 'px' }"></i>
        </template>
        <Ico n="chev" class="collapse" />
      </div>
    </section>

    <main class="body">
      <aside class="rail"><i class="mark"></i><Ico n="bars" /><Ico n="table" /><Ico n="model" /><Ico n="dax" /></aside>
      <section class="work">
        <div class="stage">
          <div class="canvas">
            <div class="report">
              <article v-for="c in charts" :key="c.k" class="card" :style="place(c.box)">
                <svg class="plot" :viewBox="c.view">
                  <text class="title" :class="{ bold: c.tb, slant: c.ti }" :x="c.title[1]" :y="c.title[3]" :textLength="c.title[2] - c.title[1]" lengthAdjust="spacingAndGlyphs">{{ c.title[0] }}</text>
                  <path v-for="(s, i) in c.slices" :key="i" :d="s.d" :fill="s.fill" />
                  <polyline v-for="l in c.lines" :key="l" :points="l" class="lead" />
                  <text v-for="(l, i) in c.labels" :key="'l' + i" class="lab" :class="{ bold: c.lb, slant: c.li, grey: c.grey, dim: c.dim }" :x="l[1]" :y="l[3]" :textLength="l[2] - l[1]" lengthAdjust="spacingAndGlyphs">{{ l[0] }}</text>
                  <g class="legend" :class="c.ls">
                    <text :x="c.lt[1]" :y="c.lt[3]" :textLength="c.lt[2] - c.lt[1]" lengthAdjust="spacingAndGlyphs">{{ c.lt[0] }}</text>
                    <template v-for="l in c.legend" :key="l[0]">
                      <circle :cx="c.dx" :cy="l[2]" r="16" :fill="l[3]" />
                      <text :x="c.tx" :y="l[2] + 9" :textLength="l[1] - c.tx" lengthAdjust="spacingAndGlyphs">{{ l[0] }}</text>
                    </template>
                  </g>
                  <g v-if="c.more" :transform="`translate(${c.more[0]} ${c.more[1]})`"><path d="M-31 0h62L0 31z" fill="#fff" /><path d="M-16 6h32L0 22z" fill="#333" /></g>
                </svg>
              </article>

              <article class="card teal" :style="place([251, 151, 327, 179])">
                <svg class="plot" viewBox="63 33 981 537">
                  <text class="title bold slant" x="396" y="100" textLength="328" lengthAdjust="spacingAndGlyphs">ده کتاب محبوب</text>
                  <g v-for="(f, i) in funnel" :key="i">
                    <rect :x="f[2]" :y="141 + i * 40.2" :width="f[3] - f[2]" height="36.5" fill="#118DFF" />
                    <text class="cat" x="99" :y="170 + i * 40.2" :textLength="f[1] - 99" lengthAdjust="spacingAndGlyphs">{{ f[0] }}</text>
                    <text v-if="f[4]" class="val" :x="f[3] + 26" :y="176 + i * 40.3" textLength="101" lengthAdjust="spacingAndGlyphs">{{ f[4] }}</text>
                  </g>
                </svg>
              </article>

              <article v-for="k in kpis" :key="k.n" class="card kpi" :style="place(k.box)">
                <T :t="k.n" :w="k.nw" :s="57" :b="900" :i="k.ni" f="Lato,sans-serif" :c="k.c" />
                <T :t="k.t" :w="k.w" :s="14" :b="700" :i="k.i" :c="k.lc || '#000'" />
              </article>

              <article v-for="t in tables" :key="t.k" class="card sheet" :class="t.k" :style="place(t.box)">
                <div class="pane">
                  <div class="grid">
                    <div class="row head">
                      <div class="a"><T t="موضوع" :w="34" :s="13" i="1" c="#111" /><i class="sort"></i></div>
                      <div class="b"><T :t="t.h[0]" :w="t.h[1]" :s="13.5" i="1" c="#333" /></div>
                    </div>
                    <div v-for="(v, i) in t.vals" :key="i" class="row">
                      <div class="a"><T :t="t.subj[i][0]" :w="t.subj[i][1]" :s="13" i="1" c="#111" /></div>
                      <div class="b"><T :t="v[0]" :w="v[1]" :s="13" i="1" :c="i % 2 ? '#000' : '#333'" /></div>
                    </div>
                  </div>
                  <div v-if="t.k === 'price'" class="row total">
                    <div class="a"><T t="Total" :w="28.6" :s="13" i="1" b="700" c="#000" /></div>
                    <div class="b"><T t="41265.99" :w="54" :s="13" i="1" b="600" /></div>
                  </div>
                  <div v-if="t.k === 'translator'" class="hbar"><i></i></div>
                </div>
                <div class="vbar"><i></i></div>
              </article>
            </div>
          </div>
          <aside class="side filters"><Ico n="dbl" /><Ico n="funnel" class="fi" />
            <svg width="20" height="54"><text class="vt" transform="translate(4 0) rotate(90)" textLength="52" lengthAdjust="spacingAndGlyphs">Filters</text></svg></aside>
        </div>
        <footer class="pages">
          <div class="device on"><Ico n="monitor" /></div><div class="device ph"><Ico n="phone" /></div>
          <Ico n="prev" class="prev" /><Ico n="next" class="next" />
          <div class="ptab"><T t="Page 1" :w="44" :s="15" b="600" /></div>
          <div class="add"><Ico n="plus" /></div>
        </footer>
      </section>
      <aside class="side viz"><Ico n="dbl" />
        <svg width="20" height="125"><text class="vt" transform="translate(4 0) rotate(90)" textLength="123" lengthAdjust="spacingAndGlyphs">Visualizations</text></svg></aside>
      <aside class="side data"><Ico n="dbl" />
        <svg width="20" height="42"><text class="vt" transform="translate(4 0) rotate(90)" textLength="41" lengthAdjust="spacingAndGlyphs">Data</text></svg></aside>
    </main>

    <footer class="status">
      <T t="Page 1 of 1" :w="73.5" :s="14.5" c="#484644" class="count" />
      <div class="zoom"><Ico n="slider" /><T t="85%" :w="29.5" :s="14" c="#605e5c" /><Ico n="fit" /></div>
    </footer>

    <footer class="taskbar">
      <div class="app s"><Ico n="win" /></div><div class="app s"><Ico n="find" /></div><div class="app m"><Ico n="tasks" /></div>
      <div v-for="a in apps" :key="a" class="app" :class="a"><Ico :n="a" /></div>
      <div class="tray">
        <Ico v-for="t in tray" :key="t[0]" :n="t[0]" :style="{ marginLeft: t[1] + 'px' }" />
        <T t="ENG" :w="28.5" :s="14.5" c="#fff" class="lang" />
        <div class="clock"><T t="11:15 PM" :w="60" :s="14.5" c="#fff" /><T t="2/20/2025" :w="67" :s="14.5" c="#fff" /></div>
        <Ico n="note" class="note" /><i class="peek"></i>
      </div>
    </footer>
  </div>
</template>

<style>
body { margin: 0; overflow: hidden; }
</style>
<style scoped>
.window { width: 1920px; height: 1080px; display: flex; flex-direction: column; background: #f3f2f1; font-family: 'Open Sans', 'DejaVu Sans', sans-serif; }
.window :deep(svg) { flex: none; display: block; }
.titlebar { height: 43px; flex: none; background: #3b3a39; display: flex; align-items: center; }
.quick { display: flex; gap: 19px; margin-left: 22px; }
.doc { margin: 5px 0 0 12px; }
.search { box-sizing: border-box; width: 500px; height: 30px; margin-left: 388px; margin-top: -1px; padding-left: 22px; display: flex; align-items: center; gap: 14px; background: #d2d2d2; border-radius: 3px; }
.account { margin-left: 356px; display: flex; align-items: center; gap: 12px; }
.controls { display: flex; align-items: center; gap: 43px; margin-left: 40px; padding-top: 3px; }
.ribbon { height: 95px; flex: none; background: #fafafa; position: relative; z-index: 3; box-shadow: 0 1px 5px rgba(0, 0, 0, .28); }
.tabs { display: flex; height: 38px; }
.tab { box-sizing: border-box; height: 38px; display: flex; align-items: center; border-bottom: 3px solid transparent; }
.tab :deep(svg) { margin-top: 5px; }
.tab.on { border-color: #117865; }
.tools { display: flex; align-items: center; height: 40px; margin-top: 12px; }
.sep { width: 1px; height: 40px; background: #d2d0ce; flex: none; }
.collapse { margin: 33px 7px 0 auto; }
.body { height: 862px; flex: none; display: flex; }
.rail { width: 51px; box-sizing: border-box; border-right: 1px solid #d8d8dd; display: flex; flex-direction: column; align-items: center; position: relative; padding-top: 15px; gap: 29px; }
.mark { position: absolute; left: 0; top: 0; width: 3px; height: 50px; background: #117865; }
.work { width: 1782px; display: flex; flex-direction: column; }
.stage { height: 818px; display: flex; }
.canvas { width: 1741px; box-sizing: border-box; background: #feff70; padding: 10px 0 0 188px; }
.report { box-sizing: border-box; width: 1364px; height: 769px; border: 2px dotted #605e48; position: relative; }
.card { position: absolute; box-sizing: border-box; background: #6dc8ab; border-radius: 16px; box-shadow: inset 0 0 0 1.2px #e4f5dc, 5px 6px 11px 1px rgba(0, 0, 0, .3); }
.teal { background: #54bfb5; box-shadow: inset 0 0 0 1.2px #d4ec3c, 5px 6px 11px 1px rgba(0, 0, 0, .3); }
.plot { width: 100%; height: 100%; font-family: Lato, 'DejaVu Sans', sans-serif; }
.title { font-size: 52px; fill: #252423; font-family: 'DejaVu Sans', sans-serif; }
.bold { font-weight: 700; }
.slant { font-style: italic; }
.lab { font-size: 37px; fill: #000; }
.lab.grey { fill: #55685f; font-family: 'Open Sans', sans-serif; font-size: 36px; }
.lab.dim { fill: #252423; }
.lead { fill: none; stroke: #3f7768; stroke-width: 3; }
.legend { font-size: 38px; font-weight: 700; font-family: 'DejaVu Sans', sans-serif; fill: #000; }
.legend.semi text { fill: #252423; }
.cat { font-size: 39px; font-weight: 700; font-family: 'DejaVu Sans', sans-serif; }
.val { font-size: 41px; fill: #111; font-family: 'Open Sans', sans-serif; }
.kpi { display: flex; flex-direction: column; align-items: center; padding: 22px 0 0 1px; }
.kpi :deep(svg:last-child) { margin-top: -7px; }
.sheet { display: flex; padding: 11.5px 0 0 12px; }
.pane { overflow: hidden; }
.grid { overflow: hidden; }
.row { display: grid; grid-template-columns: 326px 1fr; height: 20.2px; }
.row > div { display: flex; align-items: center; justify-content: center; box-sizing: border-box; border-bottom: 1px solid #12303c; background: #a0d1ff; }
.row:nth-child(even) > div { background: #0ca2d2; }
.row > .b { border-left: 1px solid #12303c; }
.row.head { height: 26.7px; }
.row.head > div { padding-bottom: 5.5px; border-bottom-color: #57b4dc; }
.head .a { position: relative; }
.sort { position: absolute; left: 6px; bottom: 3px; border: 5px solid transparent; border-top-color: #000; border-bottom: 0; }
.price .pane { width: 432px; margin-right: 15px; }
.price .grid { height: 98px; }
.price .b { border-left-width: 2px; }
.price .row.total { height: 18px; }
.price .row.total > div { background: none; border-bottom: 0; }
.price .row.total > .b { border-color: #000; }
.writer .pane { width: 532px; margin-right: 13px; }
.writer .grid { height: 117px; }
.writer .row:not(.head) .b, .translator .row:not(.head) .b { justify-content: flex-start; padding-left: 5px; }
.translator .row.head .b { padding-left: 39px; }
.translator .pane { width: 581px; margin-right: 1px; }
.translator .grid { height: 108px; }
.vbar { width: 8px; height: 116px; border-radius: 4px; background: #b6e6d4; }
.translator .vbar { height: 108px; }
.vbar i { display: block; height: 9px; border-radius: 4px; background: #66917f; }
.hbar { height: 8px; border-radius: 4px; background: #b6e6d4; }
.hbar i { display: block; width: 543px; height: 8px; border-radius: 4px; background: #66917f; }
.side { box-sizing: border-box; display: flex; flex-direction: column; align-items: center; }
.filters { width: 41px; background: #fff; border-left: 1px solid #b3b0ad; padding-top: 15px; }
.filters > svg:first-child { margin-left: 2px; }
.filters .fi { margin: 20px 0 0 8px; }
.filters svg:last-child { margin: 10px 0 0 0; }
.viz { width: 44px; border-left: 1px solid #e1dfdd; padding-top: 17px; }
.data { width: 43px; border-left: 1px solid #e1dfdd; padding-top: 17px; }
.viz svg:last-child { margin: 18px 6px 0 0; }
.data svg:last-child { margin: 18px 4px 0 0; }
.vt { font-size: 18px; font-weight: 600; fill: #252423; }
.pages { height: 44px; display: flex; align-items: center; }
.device { box-sizing: border-box; width: 30px; height: 38px; margin-left: 13px; padding-top: 9px; display: flex; justify-content: center; align-items: flex-start; border-bottom: 3px solid transparent; }
.device.on { border-color: #117865; margin-bottom: 6px; padding-right: 2px; }
.device.ph { margin-left: 24px; margin-bottom: 4px; padding-top: 6px; }
.pages > .prev { margin-left: 20px; margin-bottom: 1px; }
.pages > .next { margin-left: 22px; margin-bottom: 1px; }
.ptab { box-sizing: border-box; width: 95px; height: 44px; margin-left: 8px; background: #fff; border-left: 1px solid #a19f9d; border-bottom: 5px solid #117865; display: flex; align-items: center; justify-content: center; padding-top: 5px; }
.add { width: 49px; height: 44px; background: #117865; display: flex; align-items: center; justify-content: center; }
.add :deep(svg) { margin-top: -3px; }
.status { box-sizing: border-box; height: 30px; flex: none; border-top: 1px solid #dcdad8; border-bottom: 1px solid #000; display: flex; align-items: center; padding: 0 22px 0 5px; justify-content: space-between; }
.count { margin-top: 4px; }
.zoom { display: flex; align-items: center; }
.zoom :deep(svg:nth-child(2)) { margin: 0 24px 0 15px; }
.taskbar { height: 50px; flex: none; display: flex; background: linear-gradient(90deg, #212225, #25282f 40%, #262a31); }
.app { width: 62px; display: flex; align-items: center; justify-content: center; box-sizing: border-box; }
.app.s { width: 60px; }
.app.m { width: 62px; }
.app.chrome { border-bottom: 3px solid #b4b4b4; width: 51px; margin: 0 5.5px; padding-top: 3px; }
.app.pbi { border-bottom: 3px solid #c0c0c0; background: #3a3b3d; padding-top: 3px; }
.tray { flex: 1; display: flex; align-items: center; padding-left: 316px; }
.tray .lang { margin-left: 13px; }
.clock { width: 67px; margin-left: 16px; display: flex; flex-direction: column; align-items: center; gap: 2px; }
.note { margin: 4px 0 0 21px; }
.peek { width: 1px; height: 50px; background: #75777a; margin-left: auto; margin-right: 5px; }
</style>
